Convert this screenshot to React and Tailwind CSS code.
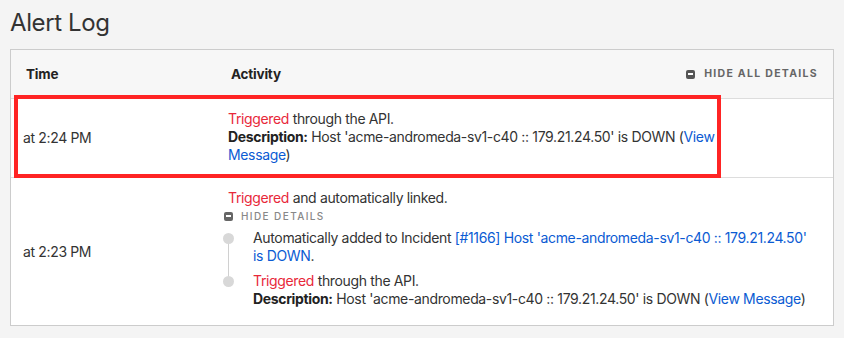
const MinusBox = ({ className = "" }) => (
  <span
    className={`inline-flex items-center justify-center w-[9px] h-[9px] rounded-[2px] ${className}`}
  >
    <span className="block w-[5px] h-[1.5px] bg-white" />
  </span>
);

const Triggered = () => <span className="text-[#e8283a]">Triggered</span>;

const ViewMessage = () => (
  <>
    (<a className="text-[#0b5bd3]">View Message</a>)
  </>
);

const Description = () => (
  <>
    <span className="font-bold text-[#222]">Description:</span> Host
    'acme-andromeda-sv1-c40 :: 179.21.24.50' is DOWN <ViewMessage />
  </>
);

const App = () => {
  return (
    <div className="w-[844px] h-[338px] bg-[#f4f4f4] px-[10px] font-['Inter',sans-serif] text-[#333] overflow-hidden">
      <h1 className="h-[49px] pt-[8px] text-[24px] leading-[30px] font-normal tracking-[-0.4px] text-[#333]">
        Alert Log
      </h1>

      <div className="border border-[#cccccc] bg-white">
        {/* header */}
        <div className="flex items-center h-[49px] bg-[#f7f7f7] border-b border-[#dddddd] text-[13.5px] font-bold tracking-[-0.2px] text-[#222]">
          <div className="w-[205px] pl-[15px]">Time</div>
          <div className="flex-1 pl-[15px]">Activity</div>
          <button className="flex items-center gap-[9px] pr-[15px] text-[10.5px] font-bold tracking-[1.3px] text-[#666]">
            <MinusBox className="bg-[#555]" />
            HIDE ALL DETAILS
          </button>
        </div>

        {/* row 1 */}
        <div className="relative flex items-center border-b border-[#dddddd] text-[14px] leading-[18px] tracking-[-0.35px]">
          <div className="w-[205px] pl-[12px]">at 2:24 PM</div>
          <div className="w-[535px] pl-[12px] pt-[11px] pb-[13px]">
            <div>
              <Triggered /> through the API.
            </div>
            <div>
              <Description />
            </div>
          </div>
          <div className="absolute top-[-4px] left-[3px] w-[707px] h-[83px] border-[4px] border-[#ff2424] pointer-events-none" />
        </div>

        {/* row 2 */}
        <div className="flex items-center text-[14px] leading-[18px] tracking-[-0.35px]">
          <div className="w-[205px] pl-[12px]">at 2:23 PM</div>
          <div className="flex-1 pl-[12px] pr-[18px] pt-[11px] pb-[17px]">
            <div>
              <Triggered /> and automatically linked.
            </div>
            <div className="-ml-[4px] flex items-center gap-[8px] h-[18px] text-[10px] font-medium tracking-[1.4px] text-[#888]">
              <MinusBox className="bg-[#666]" />
              HIDE DETAILS
            </div>
            <ul className="relative -ml-[5px] mt-[4px] flex flex-col gap-[7px]">
              <span className="absolute left-[5px] top-[10px] bottom-[28px] w-px bg-[#d0d0d0]" />
              <li className="flex">
                <span className="relative mt-[4px] w-[11px] h-[11px] shrink-0 rounded-full bg-[#d8d8d8]" />
                <div className="pl-[19px]">
                  Automatically added to Incident{" "}
                  <a className="text-[#0b5bd3]">
                    [#1166] Host 'acme-andromeda-sv1-c40 :: 179.21.24.50' is
                    DOWN
                  </a>
                  .
                </div>
              </li>
              <li className="flex">
                <span className="relative mt-[4px] w-[11px] h-[11px] shrink-0 rounded-full bg-[#d8d8d8]" />
                <div className="pl-[19px]">
                  <div>
                    <Triggered /> through the API.
                  </div>
                  <div>
                    <Description />
                  </div>
                </div>
              </li>
            </ul>
          </div>
        </div>
      </div>
    </div>
  );
};

export default App;
